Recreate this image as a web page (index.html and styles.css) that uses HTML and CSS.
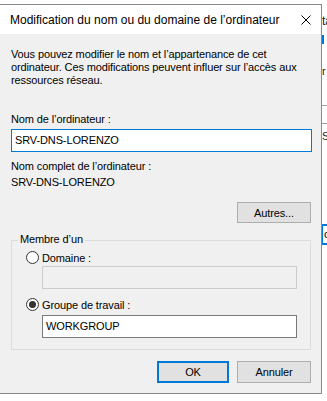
FILE: index.html
```html
<!DOCTYPE html>
<html lang="fr">

<head>
  <meta charset="UTF-8">
  <meta name="viewport" content="width=device-width, initial-scale=1.0">
  <title>Modification du nom ou du domaine de l'ordinateur</title>

  <link rel="stylesheet" href="styles.css">
</head>

<body>
  <div id="screen">
    <!-- window lying behind the dialog, only its right edge shows -->
    <div id="behind">
      <span class="bgText tabText">ta</span>
      <span class="bgMark"></span>
      <span class="bgText rText">r</span>
      <span class="bgLine lineA"></span>
      <span class="bgLine lineB"></span>
      <span class="bgText sText">S</span>
      <span class="bgSelected">oc</span>
    </div>

    <div id="dialog">
      <div class="titleBar">
        <span class="title">Modification du nom ou du domaine de l’ordinateur</span>
        <svg class="closeIcon" width="10" height="10" viewBox="0 0 10 10">
          <path d="M0.5 0.5 L9.5 9.5 M9.5 0.5 L0.5 9.5" stroke="#000" stroke-width="1" fill="none" />
        </svg>
      </div>

      <div class="dialogBody">
        <p class="intro">Vous pouvez modifier le nom et l’appartenance de cet ordinateur. Ces modifications peuvent influer sur l’accès aux ressources réseau.</p>

        <label class="label computerLabel" for="computerName">Nom de l’ordinateur :</label>
        <div id="computerName" class="textBox focused">SRV-DNS-LORENZO</div>

        <div class="label fullLabel">Nom complet de l’ordinateur :</div>
        <div class="label fullValue">SRV-DNS-LORENZO</div>

        <div class="rightRow">
          <button class="btn otherBtn">Autres...</button>
        </div>

        <div class="groupBox">
          <span class="groupTitle">Membre d’un</span>

          <div class="radioRow">
            <span class="radio"></span>Domaine :
          </div>
          <div class="textBox inGroup disabled"></div>

          <div class="radioRow second">
            <span class="radio checked"></span>Groupe de travail :
          </div>
          <div class="textBox inGroup workgroup">WORKGROUP</div>
        </div>

        <div class="buttonRow">
          <button class="btn okBtn">OK</button>
          <button class="btn">Annuler</button>
        </div>
      </div>
    </div>
  </div>
</body>

</html>
```

FILE: styles.css
```css
body {
  margin: 0px;
  background-color: #ffffff;
  font-family: "Liberation Sans", Arial, sans-serif;
  font-size: 11px;
  color: #000000;
}

#screen {
  position: relative;
  width: 327px;
  height: 401px;
  overflow: hidden;
}

#behind {
  position: absolute;
  left: 300px;
  top: 0px;
  width: 100px;
  height: 401px;
  background-color: #ffffff;
}

.bgText {
  position: absolute;
  left: 22px;
  color: #1a1a1a;
}

.tabText {
  top: 14px;
  font-size: 12px;
}

.rText {
  top: 65px;
}

.sText {
  top: 130px;
}

.bgMark {
  position: absolute;
  left: 22px;
  top: 35px;
  width: 2px;
  height: 9px;
  background-color: #0078d7;
}

.bgLine {
  position: absolute;
  left: 22px;
  width: 10px;
  height: 1px;
  background-color: #a0a0a0;
}

.lineA {
  top: 105px;
}

.lineB {
  top: 123px;
}

.bgSelected {
  position: absolute;
  left: 21px;
  top: 224px;
  width: 20px;
  height: 17px;
  border: 2px solid #0078d7;
  padding-left: 1px;
  line-height: 17px;
}

#dialog {
  position: relative;
  box-sizing: border-box;
  width: 323px;
  height: 390px;
  margin: 4px 0px 0px -1px;
  border: 1px solid #8a8a8a;
  background-color: #f0f0f0;
}

.titleBar {
  display: flex;
  justify-content: space-between;
  align-items: center;
  height: 29px;
  padding: 0px 10px 0px 10px;
  background-color: #ffffff;
}

.title {
  font-size: 12px;
}

.closeIcon {
  display: block;
}

.dialogBody {
  padding: 0px 0px 0px 11px;
  letter-spacing: -0.12px;
}

.intro {
  margin: 14px 0px 0px 0px;
  width: 300px;
  line-height: 13px;
}

.label {
  display: block;
  line-height: 13px;
}

.computerLabel {
  margin-top: 26px;
}

.textBox {
  box-sizing: border-box;
  width: 301px;
  height: 23px;
  margin-top: 3px;
  padding-left: 3px;
  border: 1px solid #7a7a7a;
  background-color: #ffffff;
  line-height: 21px;
}

.focused {
  border-color: #0078d7;
}

.fullLabel {
  margin-top: 8px;
}

.fullValue {
  margin-top: 3px;
}

.rightRow {
  display: flex;
  justify-content: flex-end;
  width: 300px;
  margin-top: 13px;
}

.btn {
  box-sizing: border-box;
  width: 74px;
  height: 22px;
  padding: 0px;
  border: 1px solid #adadad;
  background-color: #e1e1e1;
  font-family: "Liberation Sans", Arial, sans-serif;
  font-size: 11px;
  letter-spacing: -0.12px;
  color: #000000;
}

.otherBtn {
  height: 21px;
}

.groupBox {
  position: relative;
  box-sizing: border-box;
  width: 300px;
  height: 110px;
  margin-top: 17px;
  padding: 10px 0px 0px 14px;
  border: 1px solid #dcdcdc;
}

.groupTitle {
  position: absolute;
  left: 6px;
  top: -8px;
  padding: 0px 2px;
  background-color: #f0f0f0;
  line-height: 13px;
}

.radioRow {
  display: flex;
  align-items: center;
  height: 13px;
}

.radioRow.second {
  margin-top: 9px;
}

.radio {
  box-sizing: border-box;
  display: flex;
  justify-content: center;
  align-items: center;
  width: 13px;
  height: 13px;
  margin-right: 3px;
  border: 1px solid #333333;
  border-radius: 50%;
  background-color: #ffffff;
}

.radio.checked::after {
  content: "";
  width: 7px;
  height: 7px;
  border-radius: 50%;
  background-color: #333333;
}

.inGroup {
  width: 255px;
  margin-left: 16px;
  margin-top: 2px;
}

.disabled {
  border-color: #cccccc;
  background-color: #f0f0f0;
}

.workgroup {
  margin-top: 4px;
}

.buttonRow {
  display: flex;
  justify-content: flex-end;
  gap: 8px;
  width: 300px;
  margin-top: 11px;
}

.okBtn {
  width: 72px;
  border: 2px solid #0078d7;
}
```
